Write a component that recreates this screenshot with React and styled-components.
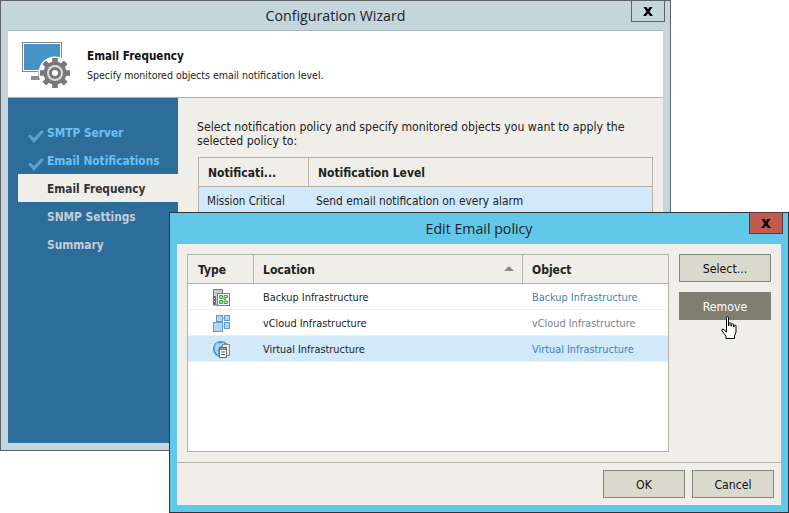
import styled, { createGlobalStyle } from 'styled-components';

const GlobalStyle = createGlobalStyle`
  html, body {
    margin: 0;
    padding: 0;
    background: #fff;
  }
  body {
    font-family: "DejaVu Sans", "Liberation Sans", sans-serif;
    font-size: 11px;
    font-stretch: condensed;
    color: #222;
  }
`;

const STEPS = [
  { id: 1, label: 'SMTP Server', state: 'done' },
  { id: 2, label: 'Email Notifications', state: 'done' },
  { id: 3, label: 'Email Frequency', state: 'current' },
  { id: 4, label: 'SNMP Settings', state: 'todo' },
  { id: 5, label: 'Summary', state: 'todo' },
];

const ROWS = [
  { id: 1, Icon: BackupIcon, location: 'Backup Infrastructure', object: 'Backup Infrastructure', link: true },
  { id: 2, Icon: CloudIcon, location: 'vCloud Infrastructure', object: 'vCloud Infrastructure', link: false },
  { id: 3, Icon: VirtualIcon, location: 'Virtual Infrastructure', object: 'Virtual Infrastructure', link: true, selected: true },
];

function CloseGlyph() {
  return (
    <svg width="10" height="9" viewBox="0 0 10 9">
      <path d="M.5 0h3L5 2.300 6.500 0h3L6.500 4.500 10 9H7L5 6.500 3 9H0l3.500-4.500z" fill="#000" />
    </svg>
  );
}

function WizardIcon() {
  const teeth = [0, 45, 90, 135, 180, 225, 270, 315];
  return (
    <svg width="50" height="48" viewBox="0 0 50 48">
      <rect x="0.500" y="0.500" width="39" height="29" fill="#fff" stroke="#85898c" />
      <rect x="2" y="2" width="36" height="26" fill="#4694c6" />
      <rect x="9" y="34" width="16" height="4" fill="#8b8e90" />
      <rect x="16" y="30" width="4" height="5" fill="#8b8e90" />
      <circle cx="33" cy="31" r="16.500" fill="#fff" />
      {teeth.map((a) => (
        <rect key={a} x="30.500" y="16" width="5" height="30" fill="#77797c" transform={`rotate(${a} 33 31)`} />
      ))}
      <circle cx="33" cy="31" r="11.500" fill="#77797c" />
      <circle cx="33" cy="31" r="8" fill="#dcdcda" />
      <circle cx="33" cy="31" r="6" fill="#77797c" />
      <circle cx="33" cy="31" r="3" fill="#fff" />
    </svg>
  );
}

function CheckIcon() {
  return (
    <svg width="16" height="13" viewBox="0 0 16 13">
      <path d="M0 6l2.500-1.500L6 8l7.500-8L16 1.500 6 13z" fill="#5ba0cf" />
    </svg>
  );
}

function BackupIcon() {
  return (
    <svg width="17" height="17" viewBox="0 0 17 17">
      <rect x="0.500" y="0.500" width="9" height="15.500" fill="#c9ccce" stroke="#77797b" />
      <rect x="0" y="7" width="3" height="9" fill="#6d6f71" />
      <rect x="1" y="9" width="1" height="1" fill="#fff" />
      <rect x="1" y="12" width="1" height="1" fill="#fff" />
      <rect x="4.500" y="4.500" width="12" height="12" fill="#fff" stroke="#3fae3a" />
      <path d="M6.500 6.500h3v3h-3zM11 6.500h3.500v2h-2v2H11zM6.500 11.500h3v3h-3zM11 12h3.500v2.500H11z" fill="#a6e0a2" stroke="#3fae3a" />
    </svg>
  );
}

function CloudIcon() {
  return (
    <svg width="17" height="17" viewBox="0 0 17 17">
      <path d="M9 3h3M9 11h3" stroke="#5b9fcd" fill="none" />
      <rect x="3.500" y="0.500" width="6" height="6" fill="#b5d3ec" stroke="#5b9fcd" />
      <rect x="11.500" y="0.500" width="5" height="5" fill="#b5d3ec" stroke="#5b9fcd" />
      <rect x="0.500" y="7.500" width="9" height="9" fill="#b5d3ec" stroke="#5b9fcd" />
      <rect x="11.500" y="7.500" width="5" height="6" fill="#b5d3ec" stroke="#5b9fcd" />
    </svg>
  );
}

function VirtualIcon() {
  return (
    <svg width="17" height="17" viewBox="0 0 17 17">
      <circle cx="8" cy="8" r="8" fill="#3f8fcb" />
      <path d="M4 1.800c2.500.8 5 .2 7-.2 1 1.200-.5 2.400-2 2.900-2 .6-1.500 2-3 2.500-1.500.6-.5 5-.2 7.500C3.500 13 1.500 10.500 1.500 7.500c0-2 1-4 2.500-5.700z" fill="#a9d2ee" />
      <rect x="9.500" y="3.500" width="7" height="11" fill="#e5e7e8" stroke="#8a8c8e" />
      <rect x="6.500" y="6.500" width="7" height="10" fill="#fff" stroke="#6b6d6f" />
      <rect x="7" y="7" width="6" height="2" fill="#8a8c8e" />
      <rect x="8" y="10.500" width="4" height="1" fill="#55585a" />
      <rect x="8" y="13" width="4" height="1" fill="#55585a" />
    </svg>
  );
}

function HandCursor() {
  return (
    <svg width="18" height="23" viewBox="0 0 18 23">
      <path
        d="M5.500 1.500C5.500.5 7.500.5 7.500 1.500V9.500h.5V7.500C8 6.500 10 6.500 10 7.500V10h.5V8.500c0-1 2-1 2 0V11h.5V9.800c0-1 2-1 2 0V16l-1.500 4v2.500h-8.500V20L1 15c-.8-1.200.4-2.500 1.800-1.500L5.500 16z"
        fill="#fff"
        stroke="#000"
        strokeWidth="1"
      />
    </svg>
  );
}

export default function App() {
  return (
    <Desktop>
      <GlobalStyle />
      <WizardWindow>
        <TitleBar $height={30}>
          Configuration Wizard
          <CloseButton>
            <CloseGlyph />
          </CloseButton>
        </TitleBar>
        <WizardHeader>
          <WizardIcon />
          <HeaderText>
            <h1>Email Frequency</h1>
            <p>Specify monitored objects email notification level.</p>
          </HeaderText>
        </WizardHeader>
        <WizardBody>
          <Sidebar>
            {STEPS.map(({ id, label, state }) => (
              <Step key={id} $state={state}>
                {state === 'done' && (
                  <StepCheck>
                    <CheckIcon />
                  </StepCheck>
                )}
                {label}
              </Step>
            ))}
          </Sidebar>
          <WizardMain>
            <Intro>
              Select notification policy and specify monitored objects you want to apply the
              <br />
              selected policy to:
            </Intro>
            <PolicyTable>
              <PolicyHeader>
                <PolicyHeadCell $width={109}>Notificati...</PolicyHeadCell>
                <PolicyHeadCell>Notification Level</PolicyHeadCell>
              </PolicyHeader>
              <PolicyRow>
                <PolicyCell $width={109} $size={11.5}>Mission Critical</PolicyCell>
                <PolicyCell $size={11.85}>Send email notification on every alarm</PolicyCell>
              </PolicyRow>
            </PolicyTable>
          </WizardMain>
        </WizardBody>
      </WizardWindow>

      <EditDialog>
        <TitleBar $height={31}>
          Edit Email policy
          <CloseButton $danger>
            <CloseGlyph />
          </CloseButton>
        </TitleBar>
        <DialogBody>
          <DialogMain>
            <ObjectList>
              <ListHeader>
                <HeadCell $col="type">Type</HeadCell>
                <HeadCell $col="location">
                  Location
                  <SortArrow />
                </HeadCell>
                <HeadCell $col="object">Object</HeadCell>
              </ListHeader>
              {ROWS.map(({ id, Icon, location, object, link, selected }) => (
                <ListRow key={id} $selected={selected}>
                  <IconCell>
                    <Icon />
                  </IconCell>
                  <LocationCell>{location}</LocationCell>
                  <ObjectCell $link={link}>{object}</ObjectCell>
                </ListRow>
              ))}
            </ObjectList>
            <SideButtons>
              <Button $width={92}>Select...</Button>
              <Button $width={92} $hover>
                Remove
                <Cursor>
                  <HandCursor />
                </Cursor>
              </Button>
            </SideButtons>
          </DialogMain>
          <DialogFooter>
            <Button $width={82}>OK</Button>
            <Button $width={82}>Cancel</Button>
          </DialogFooter>
        </DialogBody>
      </EditDialog>
    </Desktop>
  );
}

const Desktop = styled.div`
  position: relative;
  width: 789px;
  height: 513px;
  overflow: hidden;
`;

const WizardWindow = styled.div`
  box-sizing: border-box;
  width: 671px;
  height: 451px;
  display: flex;
  flex-direction: column;
  padding: 0 7px 7px;
  background: #c4d6dc;
  border: 1px solid #5d6268;
`;

const TitleBar = styled.div`
  position: relative;
  flex: none;
  height: ${(p) => p.$height - 1}px;
  margin: 0 -7px;
  display: flex;
  align-items: center;
  justify-content: center;
  font-family: "Open Sans", sans-serif;
  font-stretch: normal;
  font-size: 14.2px;
  color: #1c2227;
`;

const CloseButton = styled.div`
  position: absolute;
  top: -1px;
  right: 5px;
  box-sizing: border-box;
  width: 34px;
  height: 22px;
  display: flex;
  align-items: center;
  justify-content: center;
  background: ${(p) => (p.$danger ? '#c15b52' : '#c4d6dc')};
  border: 1px solid ${(p) => (p.$danger ? '#5d3a36' : '#5d6268')};
`;

const WizardHeader = styled.div`
  flex: none;
  box-sizing: border-box;
  height: 68px;
  display: flex;
  align-items: flex-start;
  gap: 15px;
  padding: 11px 0 0 14px;
  background: #fff;
  border-top: 1px solid #a9b8be;
  border-bottom: 1px solid #b5b3a9;
`;

const HeaderText = styled.div`
  padding-top: 7px;

  h1 {
    margin: 0 0 5px;
    font-size: 11.6px;
    line-height: 14px;
    font-weight: 700;
    color: #111;
  }

  p {
    margin: 0;
    font-size: 10.5px;
    line-height: 14px;
    color: #222;
  }
`;

const WizardBody = styled.div`
  flex: 1;
  min-height: 0;
  display: flex;
`;

const Sidebar = styled.div`
  flex: none;
  width: 170px;
  padding: 20px 0 0 10px;
  box-sizing: border-box;
  background: #2c6d99;
`;

const STEP_COLORS = {
  done: '#6cc0f5',
  current: '#333',
  todo: '#c6ced6',
};

const Step = styled.div`
  position: relative;
  box-sizing: border-box;
  height: 28px;
  display: flex;
  align-items: center;
  padding: 2px 0 0 29px;
  font-size: 11.8px;
  font-weight: 700;
  color: ${(p) => STEP_COLORS[p.$state]};
  background: ${(p) => (p.$state === 'current' ? '#efeee8' : 'transparent')};
`;

const StepCheck = styled.span`
  position: absolute;
  left: 10px;
  top: 12px;
  line-height: 0;
`;

const WizardMain = styled.div`
  flex: 1;
  padding: 22px 10px 0 19px;
  background: #efeee8;
`;

const Intro = styled.p`
  margin: 0 0 9px;
  font-size: 12.2px;
  line-height: 14px;
  color: #222;
`;

const PolicyTable = styled.div`
  margin-left: 1px;
  border: 1px solid #b5b3a9;
  background: #fff;
`;

const PolicyHeader = styled.div`
  display: flex;
  height: 28px;
  border-bottom: 1px solid #b5b3a9;
  background: #efeee8;
`;

const PolicyHeadCell = styled.div`
  box-sizing: border-box;
  flex: ${(p) => (p.$width ? `0 0 ${p.$width}px` : 1)};
  display: flex;
  align-items: center;
  padding: 2px 0 0 9px;
  font-size: 12px;
  font-weight: 700;
  color: #222;
  & + & {
    border-left: 1px solid #b5b3a9;
  }
`;

const PolicyRow = styled.div`
  display: flex;
  height: 28px;
  background: #d1e9f9;
`;

const PolicyCell = styled.div`
  box-sizing: border-box;
  flex: ${(p) => (p.$width ? `0 0 ${p.$width}px` : 1)};
  display: flex;
  align-items: center;
  padding-left: 8px;
  font-size: ${(p) => p.$size}px;
  color: #222;
`;

const EditDialog = styled.div`
  position: absolute;
  left: 169px;
  top: 212px;
  box-sizing: border-box;
  width: 620px;
  height: 301px;
  display: flex;
  flex-direction: column;
  padding: 0 7px 7px;
  background: #62c8ea;
  border: 1px solid #2f3336;
`;

const DialogBody = styled.div`
  flex: 1;
  min-height: 0;
  display: flex;
  flex-direction: column;
  background: #efeee8;
  border-top: 1px solid #8fb6c6;
`;

const DialogMain = styled.div`
  flex: 1;
  display: flex;
  gap: 10px;
  padding: 10px;
  min-height: 0;
`;

const ObjectList = styled.div`
  box-sizing: border-box;
  width: 482px;
  border: 1px solid #b5b3a9;
  background: #fff;
`;

const ListHeader = styled.div`
  display: grid;
  grid-template-columns: 66px 269px 1fr;
  height: 28px;
  border-bottom: 1px solid #b5b3a9;
  background: #efeee8;
`;

const HeadCell = styled.div`
  position: relative;
  display: flex;
  align-items: center;
  padding: 2px 0 0 ${(p) => (p.$col === 'type' ? 10 : 9)}px;
  font-size: 12px;
  font-weight: 700;
  color: #222;
  border-right: ${(p) => (p.$col === 'object' ? 'none' : '1px solid #b5b3a9')};
`;

const SortArrow = styled.span`
  position: absolute;
  right: 8px;
  top: 11px;
  border-left: 5px solid transparent;
  border-right: 5px solid transparent;
  border-bottom: 5px solid #8d8c84;
`;

const ListRow = styled.div`
  display: grid;
  grid-template-columns: 66px 269px 1fr;
  height: 25px;
  align-items: center;
  border-bottom: 1px solid #efeee8;
  background: ${(p) => (p.$selected ? '#d1e9f9' : '#fff')};
`;

const IconCell = styled.div`
  display: flex;
  justify-content: center;
  padding: 1px 0 0 1px;
  line-height: 0;
`;

const LocationCell = styled.div`
  padding: 2px 0 0 9px;
  font-size: 10.85px;
  color: #222;
`;

const ObjectCell = styled.div`
  padding: 2px 0 0 9px;
  font-size: 10.85px;
  color: ${(p) => (p.$link ? '#3f7fc4' : '#808080')};
`;

const SideButtons = styled.div`
  display: flex;
  flex-direction: column;
  gap: 10px;
`;

const Button = styled.div`
  position: relative;
  box-sizing: border-box;
  width: ${(p) => p.$width}px;
  height: 28px;
  display: flex;
  align-items: center;
  justify-content: center;
  padding-top: 2px;
  font-size: 12.2px;
  color: ${(p) => (p.$hover ? '#fff' : '#111')};
  background: ${(p) => (p.$hover ? '#7e7f71' : '#d9d9cd')};
  border: 1px solid ${(p) => (p.$hover ? '#7e7f71' : '#85867a')};
`;

const Cursor = styled.span`
  position: absolute;
  left: 41px;
  top: 23px;
  line-height: 0;
`;

const DialogFooter = styled.div`
  flex: none;
  box-sizing: border-box;
  height: 43px;
  display: flex;
  justify-content: flex-end;
  gap: 7px;
  padding: 7px 7px 0 0;
  border-top: 1px solid #b5b3a9;
`;
